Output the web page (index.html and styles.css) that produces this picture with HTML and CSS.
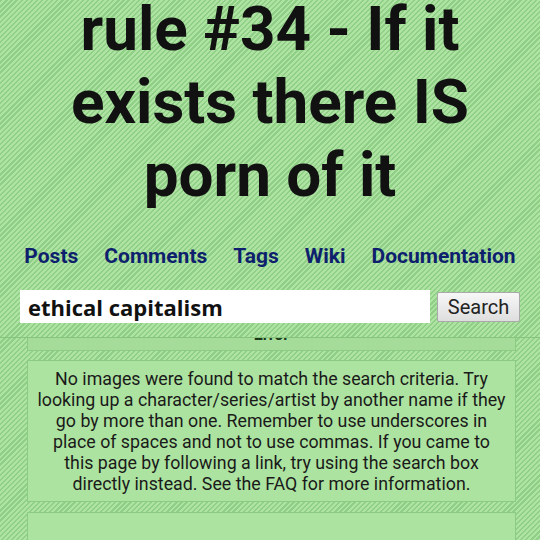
FILE: index.html
```html
<!DOCTYPE html>
<html lang="en">
<head>
<meta charset="utf-8">
<title>rule #34</title>
<link rel="stylesheet" href="styles.css">
</head>
<body>
<header class="top">
  <h1 class="title"><span class="line">rule #34 - If it</span><span class="line">exists there IS</span><span class="line">porn of it</span></h1>
  <nav class="nav">
    <a href="#">Posts</a>
    <a href="#">Comments</a>
    <a href="#">Tags</a>
    <a href="#">Wiki</a>
    <a href="#">Documentation</a>
  </nav>
  <form class="search">
    <input class="search-input" type="text" value="ethical capitalism">
    <button class="search-btn" type="button">Search</button>
  </form>
</header>
<main class="content">
  <div class="viewport">
    <section class="panel panel-head"><h2 class="panel-title">Error</h2></section>
    <section class="panel panel-msg">
      <p>No images were found to match the search criteria. Try<br>looking up a character/series/artist by another name if they<br>go by more than one. Remember to use underscores in<br>place of spaces and not to use commas. If you came to<br>this page by following a link, try using the search box<br>directly instead. See the FAQ for more information.</p>
    </section>
    <section class="panel panel-empty"></section>
  </div>
</main>
</body>
</html>
```
FILE: styles.css
```css
html, body {
  margin: 0;
  padding: 0;
  height: 100%;
  overflow: hidden;
}
body {
  font-family: Roboto, "Liberation Sans", sans-serif;
  background: repeating-linear-gradient(-45deg, #aee3a3 0 2px, #8fcf86 2px 3.6px);
  color: #111;
}
.top {
  display: flex;
  flex-direction: column;
  align-items: center;
}
.title {
  margin: -8px 0 0;
  font-size: 62px;
  line-height: 73px;
  font-weight: 700;
  text-align: center;
  color: #111;
}
.line {
  display: block;
}
.nav {
  margin-top: 33px;
  display: flex;
  gap: 26px;
  justify-content: center;
  font-size: 21px;
  line-height: 24px;
  font-weight: 700;
}
.nav a {
  color: #0d1f6d;
  text-decoration: none;
}
.search {
  margin-top: 22px;
  align-self: stretch;
  display: flex;
  align-items: center;
  padding: 0 20px;
  gap: 7px;
}
.search-input {
  width: 410px;
  height: 33px;
  box-sizing: border-box;
  border: none;
  background: #fff;
  padding: 0 8px;
  font-family: "Open Sans", sans-serif;
  font-weight: 700;
  font-size: 22px;
  color: #111;
  outline: none;
}
.search-btn {
  width: 83px;
  height: 30px;
  box-sizing: border-box;
  border: 1px solid #a9a9a9;
  border-radius: 2px;
  background: linear-gradient(#f7f7f7, #dedede);
  font-family: Roboto, sans-serif;
  font-size: 20px;
  color: #222;
  padding: 0;
}
.content {
  margin-top: 14px;
  border-top: 1px solid #86c47e;
  padding: 0 24px 0 27px;
}
.viewport {
  overflow: hidden;
  display: flex;
  flex-direction: column;
  gap: 9px;
  height: 300px;
}
.panel {
  background: #ade3a0;
  border: 1px solid #8ccb84;
  box-sizing: border-box;
}
.panel-head {
  margin-top: -18px;
  background: #a5dc9a;
  padding: 4px 0 5px;
}
.panel-title {
  margin: 0;
  font-size: 16px;
  line-height: 20px;
  font-weight: 700;
  text-align: center;
  color: #1a3a1a;
}
.panel-msg {
  padding: 7px 2px;
}
.panel-msg p {
  margin: 0;
  font-size: 17.8px;
  line-height: 21px;
  text-align: center;
  color: #1a1a1a;
  white-space: nowrap;
}
.panel-empty {
  margin-top: 1px;
  height: 60px;
}
```
